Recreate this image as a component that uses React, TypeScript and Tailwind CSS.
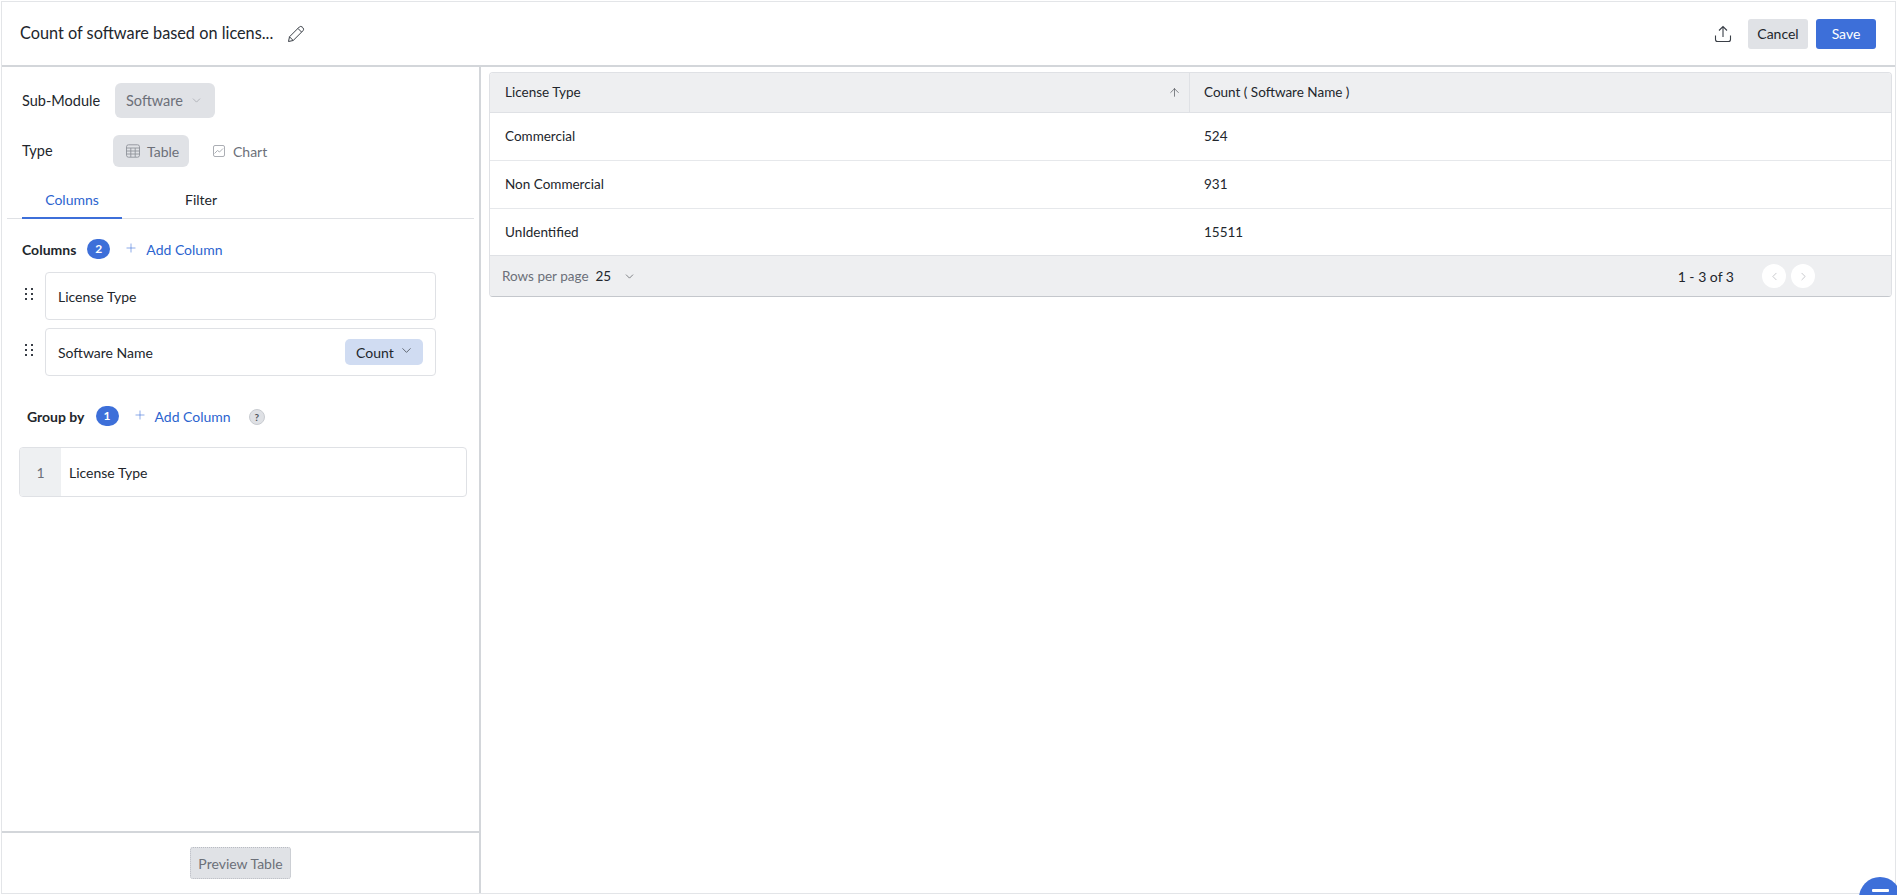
import { ChevronDown, ChevronLeft, ChevronRight, Plus, ArrowUp } from 'lucide-react';

const ROWS = [
  { name: 'Commercial', count: '524', h: 'h-[48px]' },
  { name: 'Non Commercial', count: '931', h: 'h-[48px]' },
  { name: 'UnIdentified', count: '15511', h: 'h-[47px]' },
];

function Dots() {
  return (
    <svg width="8" height="12" viewBox="0 0 8 12" className="text-[#3a3f47]">
      {[1, 6, 11].map(y => (
        <g key={y}>
          <rect x="0" y={y - 1} width="2" height="2" fill="currentColor" />
          <rect x="6" y={y - 1} width="2" height="2" fill="currentColor" />
        </g>
      ))}
    </svg>
  );
}

function Badge({ n }: { n: number }) {
  return (
    <span className="w-[23px] h-[20px] rounded-full bg-[#3d6fd9] text-white text-[12px] font-bold flex items-center justify-center">
      {n}
    </span>
  );
}

function AddColumn() {
  return (
    <span className="flex items-center gap-[8px] text-[#2b64cf] text-[14px]">
      <Plus className="w-[14px] h-[14px] -mt-[2px] text-[#3d6fd9]" strokeWidth={1} />
      <span className="mt-[1px]">Add Column</span>
    </span>
  );
}

export default function App() {
  return (
    <div className="relative w-[1897px] h-[895px] overflow-hidden bg-white pt-px pl-px pr-px pb-px font-['Lato',sans-serif] text-[#22262c]">
      <div className="h-[893px] border border-[#e3e5e8] flex flex-col">

        {/* Header */}
        <div className="h-[65px] shrink-0 border-b-2 border-[#d3d6da] flex items-center pl-[18px] pr-[19px]">
          <span className="text-[16.3px] whitespace-nowrap">Count of software based on licens...</span>
          <svg width="18" height="18" viewBox="0 0 18 18" fill="none" stroke="#3a3f47" strokeWidth="1" className="ml-[14px]">
            <path d="M1.5 16.5 L2.5 11.8 L12.3 2 Q13.6 0.8 15.2 2 L16 2.8 Q17.2 4.3 16 5.7 L6.2 15.5 Z M11 3.5 L14.5 7 M2.5 11.8 L6.2 15.5" />
          </svg>
          <svg width="18" height="18" viewBox="0 0 18 18" fill="none" stroke="#3a3f47" strokeWidth="1.1" className="ml-auto">
            <path d="M9 12 V1.5 M5 5.5 L9 1.5 L13 5.5 M1.5 10.5 V14.5 Q1.5 16.5 3.5 16.5 H14.5 Q16.5 16.5 16.5 14.5 V10.5" />
          </svg>
          <button className="ml-[16px] w-[60px] h-[30px] rounded-[3px] bg-[#e0e2e6] text-[14px]">Cancel</button>
          <button className="ml-[8px] w-[60px] h-[30px] rounded-[3px] bg-[#3d6fd9] text-white text-[14px]">Save</button>
        </div>

        <div className="flex-1 flex min-h-0">

          {/* Left panel */}
          <div className="w-[479px] shrink-0 border-r-2 border-[#d3d6da] flex flex-col">
            <div className="flex-1">
              <div className="flex items-center pt-[16px] pl-[20px]">
                <span className="w-[93px] text-[14.5px]">Sub-Module</span>
                <span className="w-[100px] h-[35px] rounded-[6px] bg-[#e0e2e6] text-[#6c7079] text-[14.5px] flex items-center pl-[11px] gap-[7px]">
                  Software <ChevronDown className="w-[13px] h-[13px] text-[#9a9da4]" strokeWidth={1.2} />
                </span>
              </div>
              <div className="flex items-center mt-[17px] pl-[20px]">
                <span className="w-[91px] text-[14.5px]">Type</span>
                <span className="w-[76px] h-[32px] rounded-[6px] bg-[#e0e2e6] text-[#6c7079] text-[14px] flex items-center pl-[13px] gap-[7px]">
                  <svg width="14" height="14" viewBox="0 0 14 14" fill="none" stroke="#8f939a" strokeWidth="0.9">
                    <rect x="0.5" y="0.8" width="13" height="12.4" rx="2" />
                    <path d="M0.5 4 H13.5 M0.5 7 H13.5 M0.5 10 H13.5 M4.8 4 V13 M9.2 4 V13" />
                  </svg>
                  Table
                </span>
                <span className="ml-[24px] text-[#6c7079] text-[14px] flex items-center gap-[8px]">
                  <svg width="12" height="12" viewBox="0 0 12 12" fill="none" stroke="#a2a5ab" strokeWidth="0.9">
                    <rect x="0.5" y="0.5" width="11" height="11" rx="1.5" />
                    <path d="M1.5 8.5 L4.5 5.5 L6.5 7 L10 3.5" />
                  </svg>
                  Chart
                </span>
              </div>
              <div className="mt-[14px] mx-[5px] border-b border-[#dfe1e5] flex h-[38px]">
                <div className="ml-[15px] w-[100px] h-[38px] border-b-2 border-[#3d6fd9] text-[#2b64cf] text-[14px] flex items-center justify-center">
                  Columns
                </div>
                <div className="ml-[63px] text-[14px] flex items-center h-[37px]">Filter</div>
              </div>

              {/* Columns */}
              <div className="flex items-center pl-[20px] mt-[20px] h-[20px]">
                <span className="font-bold text-[14px] mr-[11px]">Columns</span>
                <Badge n={2} />
                <span className="ml-[14px]"><AddColumn /></span>
              </div>
              <div className="mt-[13px] flex flex-col gap-[8px] pl-[23px] w-[434px]">
                <div className="flex items-start">
                  <span className="mt-[16px] mr-[12px] flex"><Dots /></span>
                  <div className="flex-1 h-[48px] rounded-[4px] border border-[#dfe1e5] flex items-center pl-[12px] text-[14px]">License Type</div>
                </div>
                <div className="flex items-start">
                  <span className="mt-[16px] mr-[12px] flex"><Dots /></span>
                  <div className="flex-1 h-[48px] rounded-[4px] border border-[#dfe1e5] flex items-center pl-[12px] text-[14px]">
                    Software Name
                    <span className="ml-auto mr-[12px] w-[78px] h-[26px] rounded-[5px] bg-[#d0dcf2] flex items-center pl-[11px] gap-[5px]">
                      Count <ChevronDown className="w-[15px] h-[15px] -mt-[3px]" strokeWidth={1} />
                    </span>
                  </div>
                </div>
              </div>

              {/* Group by */}
              <div className="flex items-center pl-[25px] mt-[30px] h-[20px]">
                <span className="font-bold text-[14px] mr-[11px]">Group by</span>
                <Badge n={1} />
                <span className="ml-[14px]"><AddColumn /></span>
                <span className="ml-[18px] mt-[2px] w-[16px] h-[16px] rounded-full bg-[#dfe1e5] border border-[#c9ccd1] text-[10px] font-bold text-[#50545b] flex items-center justify-center">?</span>
              </div>
              <div className="mt-[21px] ml-[17px] w-[448px] h-[50px] rounded-[4px] border border-[#dfe1e5] flex items-stretch overflow-hidden text-[14px]">
                <span className="w-[41px] bg-[#eef0f2] text-[#6c7079] flex items-center justify-center">1</span>
                <span className="pl-[8px] flex items-center">License Type</span>
              </div>
            </div>

            <div className="h-[62px] shrink-0 border-t-2 border-[#d3d6da] flex justify-center pt-[14px]">
              <button className="w-[101px] h-[32px] rounded-[3px] bg-[#e0e2e6] border border-dotted border-[#b8bbc2] text-[#6c7079] text-[14px]">
                Preview Table
              </button>
            </div>
          </div>

          {/* Preview table */}
          <div className="flex-1 pt-[5px] pl-[8px] pr-[3px]">
            <div className="rounded-[4px] border border-[#dfe1e5] border-b-[#c4c7cc] overflow-hidden text-[13.5px]">
              <div className="flex h-[40px] bg-[#eeeff1] border-b border-[#dfe1e5]">
                <div className="w-[700px] pl-[15px] pr-[8px] flex items-center justify-between border-r border-[#dfe1e5]">
                  License Type
                  <ArrowUp className="w-[13px] h-[13px]" strokeWidth={1} />
                </div>
                <div className="flex-1 pl-[14px] flex items-center">Count ( Software Name )</div>
              </div>
              {ROWS.map(r => (
                <div key={r.name} className={`flex items-center ${r.h} border-b border-[#e6e8eb]`}>
                  <div className="w-[700px] pl-[15px]">{r.name}</div>
                  <div className="flex-1 pl-[14px]">{r.count}</div>
                </div>
              ))}
              <div className="h-[41px] bg-[#eeeff1] flex items-center pl-[12px] border-t border-[#dfe1e5] -mt-px">
                <span className="text-[#6c7079]">Rows per page</span>
                <span className="ml-[7px]">25</span>
                <ChevronDown className="w-[13px] h-[13px] ml-[12px]" strokeWidth={1} />
                <span className="ml-auto text-[14px]">1 - 3 of 3</span>
                <span className="ml-[28px] w-[24px] h-[24px] rounded-full bg-white flex items-center justify-center">
                  <ChevronLeft className="w-[13px] h-[13px] text-[#9a9da4]" strokeWidth={1} />
                </span>
                <span className="ml-[5px] mr-[76px] w-[24px] h-[24px] rounded-full bg-white flex items-center justify-center">
                  <ChevronRight className="w-[13px] h-[13px] text-[#9a9da4]" strokeWidth={1} />
                </span>
              </div>
            </div>
          </div>
        </div>
      </div>

      {/* Floating help button */}
      <div className="absolute left-[1859px] top-[877px] w-[42px] h-[42px] rounded-full bg-[#3d6fd9] flex justify-center pt-[12px]">
        <span className="w-[17px] h-[3px] bg-white rounded-[1px]" />
      </div>
    </div>
  );
}
